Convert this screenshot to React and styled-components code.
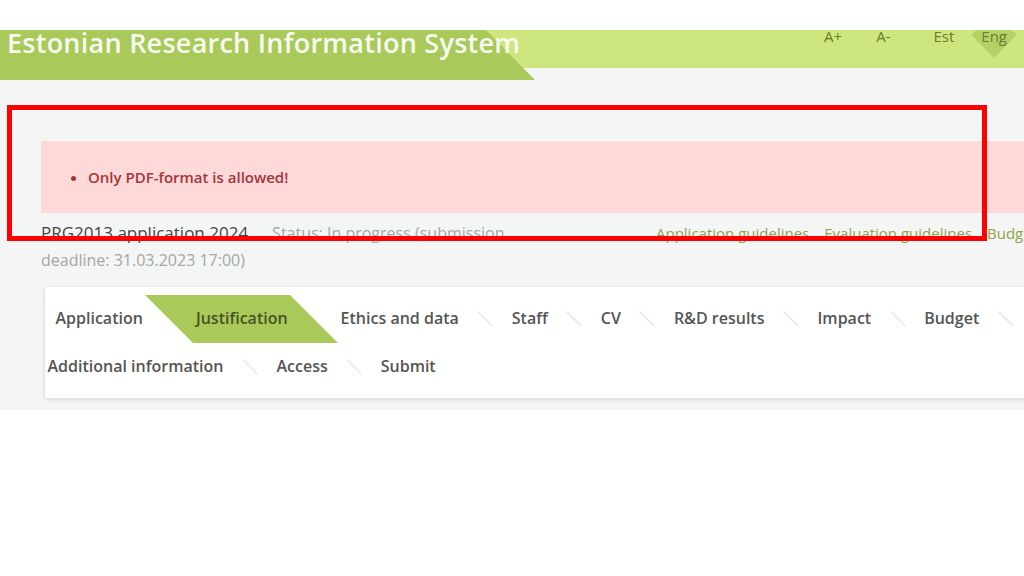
import React from "react";
import styled, { createGlobalStyle } from "styled-components";

const GlobalStyle = createGlobalStyle`
  html, body { margin: 0; padding: 0; background: #ffffff; overflow: hidden; }
  body { font-family: "Open Sans", "DejaVu Sans", sans-serif; }
  * { box-sizing: border-box; }
`;

const Page = styled.div`
  position: relative;
  width: 1024px;
  height: 576px;
  overflow: hidden;
  background: #ffffff;
`;

const TopGap = styled.div`
  height: 30px;
  background: #ffffff;
`;

const Shell = styled.div`
  background: #f4f6f5;
  padding-bottom: 12px;
  width: 1024px;
  overflow: hidden;
`;

const Header = styled.header`
  position: relative;
  display: flex;
  align-items: flex-start;
  height: 50px;
  overflow: hidden;
  background: linear-gradient(#cde67d 0 38px, transparent 38px);
`;

const Brand = styled.div`
  position: relative;
  z-index: 0;
  flex: 0 0 535px;
  height: 50px;
  padding-left: 7px;
  &::before {
    content: "";
    position: absolute;
    z-index: -1;
    inset: 0;
    background: #a9c95b;
    clip-path: polygon(0 0, 486px 0, 535px 100%, 0 100%);
  }
`;

const BrandTitle = styled.h1`
  margin: 0;
  font-size: 27px;
  line-height: 26px;
  letter-spacing: 0.25px;
  font-weight: 600;
  color: #f8fbef;
  white-space: nowrap;
`;

const Tools = styled.nav`
  margin-left: auto;
  padding-right: 17px;
  display: flex;
  gap: 43px;
`;

const ToolGroup = styled.div`
  display: flex;
  gap: ${(p) => p.$gap}px;
`;

const ToolLink = styled.span`
  position: relative;
  z-index: 0;
  font-size: 15px;
  line-height: 13px;
  color: #6b7d2c;
  ${(p) =>
    p.$active &&
    `
    &::before {
      content: "";
      position: absolute;
      z-index: -1;
      left: 50%;
      top: 5px;
      width: 32px;
      height: 32px;
      background: #b5d166;
      transform: translate(-50%, -50%) rotate(45deg);
    }
  `}
`;

const Main = styled.main`
  width: 1071px;
  margin-left: 41px;
  padding-top: 61px;
`;

const Alert = styled.div`
  height: 72px;
  background: #fdd9d9;
  display: flex;
  align-items: center;
`;

const AlertList = styled.ul`
  margin: 0;
  padding-left: 47px;
  color: #a5353a;
  font-size: 15px;
  font-weight: 600;
  line-height: 20px;
`;

const TitleRow = styled.div`
  display: flex;
  justify-content: space-between;
  align-items: flex-start;
  margin-top: 6px;
`;

const TitleBlock = styled.div`
  width: 520px;
  line-height: 27px;
`;

const AppTitle = styled.span`
  font-size: 17px;
  color: #444444;
  margin-right: 24px;
`;

const Status = styled.span`
  font-size: 16px;
  color: #a3a7a6;
`;

const Guides = styled.div`
  display: flex;
  gap: 15px;
  line-height: 27px;
  padding-top: 1px;
`;

const GuideLink = styled.a`
  font-size: 15px;
  color: #8ea34e;
  text-decoration: none;
  white-space: nowrap;
`;

const TabCard = styled.div`
  margin-top: 13px;
  margin-left: 4px;
  background: #ffffff;
  box-shadow: 0 1px 4px rgba(0, 0, 0, 0.16);
  padding: 8px 0 7px;
`;

const TabList = styled.ul`
  list-style: none;
  margin: 0 0 0 -24px;
  padding: 0;
  display: flex;
  flex-wrap: wrap;
`;

const Tab = styled.li`
  position: relative;
  z-index: 0;
  height: 48px;
  line-height: 46px;
  padding: 0 26.5px;
  font-size: 16px;
  font-weight: 600;
  white-space: nowrap;
  color: ${(p) => (p.$active ? "#47531f" : "#555555")};
  &:first-child { margin-left: 8px; }
  ${(p) =>
    p.$active &&
    `
    &::before {
      content: "";
      position: absolute;
      z-index: -1;
      inset: 0;
      background: #a9c95b;
      transform: skewX(45deg);
    }
  `}
  ${(p) =>
    !p.$noSep &&
    `
    &::after {
      content: "";
      position: absolute;
      right: 0;
      top: 50%;
      width: 1px;
      height: 21px;
      background: #e0e2e1;
      box-shadow: 1px 0 1px rgba(0,0,0,0.04);
      transform: translate(50%, -50%) rotate(-45deg);
    }
  `}
`;

const Marker = styled.div`
  position: absolute;
  left: 7px;
  top: 105px;
  width: 980px;
  height: 136px;
  border: 5px solid #ff0000;
  pointer-events: none;
`;

const tabs = [
  "Application",
  "Justification",
  "Ethics and data",
  "Staff",
  "CV",
  "R&D results",
  "Impact",
  "Budget",
  "Additional information",
  "Access",
  "Submit",
];
const activeIndex = 1;

export default function App() {
  return (
    <Page>
      <GlobalStyle />
      <TopGap />
      <Shell>
        <Header>
          <Brand>
            <BrandTitle>Estonian Research Information System</BrandTitle>
          </Brand>
          <Tools>
            <ToolGroup $gap={34}>
              <ToolLink>A+</ToolLink>
              <ToolLink>A-</ToolLink>
            </ToolGroup>
            <ToolGroup $gap={27}>
              <ToolLink>Est</ToolLink>
              <ToolLink $active>Eng</ToolLink>
            </ToolGroup>
          </Tools>
        </Header>
        <Main>
          <Alert>
            <AlertList>
              <li>Only PDF-format is allowed!</li>
            </AlertList>
          </Alert>
          <TitleRow>
            <TitleBlock>
              <AppTitle>PRG2013 application 2024</AppTitle>
              <Status>Status: In progress (submission deadline: 31.03.2023 17:00)</Status>
            </TitleBlock>
            <Guides>
              <GuideLink href="#">Application guidelines</GuideLink>
              <GuideLink href="#">Evaluation guidelines</GuideLink>
              <GuideLink href="#">Budget guidelines</GuideLink>
            </Guides>
          </TitleRow>
          <TabCard>
            <TabList>
              {tabs.map((t, i) => (
                <Tab
                  key={t}
                  $active={i === activeIndex}
                  $noSep={i === activeIndex || i === activeIndex - 1 || i === tabs.length - 1}
                >
                  {t}
                </Tab>
              ))}
            </TabList>
          </TabCard>
        </Main>
      </Shell>
      <Marker />
    </Page>
  );
}
